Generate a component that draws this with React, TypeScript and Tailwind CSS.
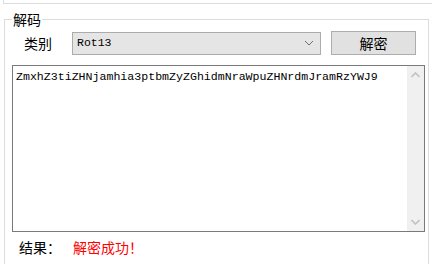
import React from 'react';

const cjk = { fontFamily: '"Noto Sans CJK SC", "Noto Sans", sans-serif' };
const mono = { fontFamily: '"Liberation Mono", "Noto Sans CJK SC", monospace' };

export default function App() {
  return (
    <div className="w-[432px] h-[264px] bg-white overflow-hidden" style={cjk}>
      {/* bottom edge of the previous group */}
      <div className="h-[4px] ml-[3px] border-l border-b border-[#dcdcdc]" />

      {/* 解码 group */}
      <div className="relative mt-[15px] ml-[4px] mr-[3px] h-[260px] border-t border-l border-r border-[#dcdcdc]">
        <span className="absolute -top-[11px] left-[7px] bg-white px-[1px] text-[14px] leading-[20px] text-black">
          解码
        </span>

        <div className="flex items-center pt-[11px] pl-[19px]">
          <span className="text-[14px] leading-[20px] text-black w-[48px]">类别</span>
          <div className="flex items-center justify-between w-[249px] h-[23px] bg-[#e5e5e5] border border-[#acacac] pl-[4px] pr-[5px]">
            <span className="text-[11.5px] text-black" style={mono}>Rot13</span>
            <svg width="10" height="6" viewBox="0 0 10 6" className="mr-[1px]">
              <path d="M1 1l4 4 4-4" fill="none" stroke="#707070" strokeWidth="1" />
            </svg>
          </div>
          <button className="ml-[10px] w-[85px] h-[24px] bg-[#e1e1e1] border border-[#adadad] text-[14px] leading-[20px] text-black">
            解密
          </button>
        </div>

        <div className="flex mt-[10px] ml-[7px] w-[413px] h-[167px] border border-[#7a7a7a] bg-white">
          <div className="flex-1 pl-[3px] pt-[4px] text-[11.6px] leading-[14px] text-black" style={mono}>
            ZmxhZ3tiZHNjamhia3ptbmZyZGhidmNraWpuZHNrdmJramRzYWJ9
          </div>
          <div className="w-[17px] bg-[#f0f0f0] flex flex-col items-center justify-between py-[6px]">
            <svg width="9" height="6" viewBox="0 0 9 6">
              <path d="M0.5 5l4-4 4 4" fill="none" stroke="#c2c2c2" strokeWidth="1.6" />
            </svg>
            <svg width="9" height="6" viewBox="0 0 9 6">
              <path d="M0.5 1l4 4 4-4" fill="none" stroke="#c2c2c2" strokeWidth="1.6" />
            </svg>
          </div>
        </div>

        <div className="flex items-center mt-[5px] pl-[14px] text-[14px] leading-[20px]">
          <span className="w-[54px] text-black">结果：</span>
          <span className="text-[#ff0000]">解密成功！</span>
        </div>
      </div>
    </div>
  );
}
